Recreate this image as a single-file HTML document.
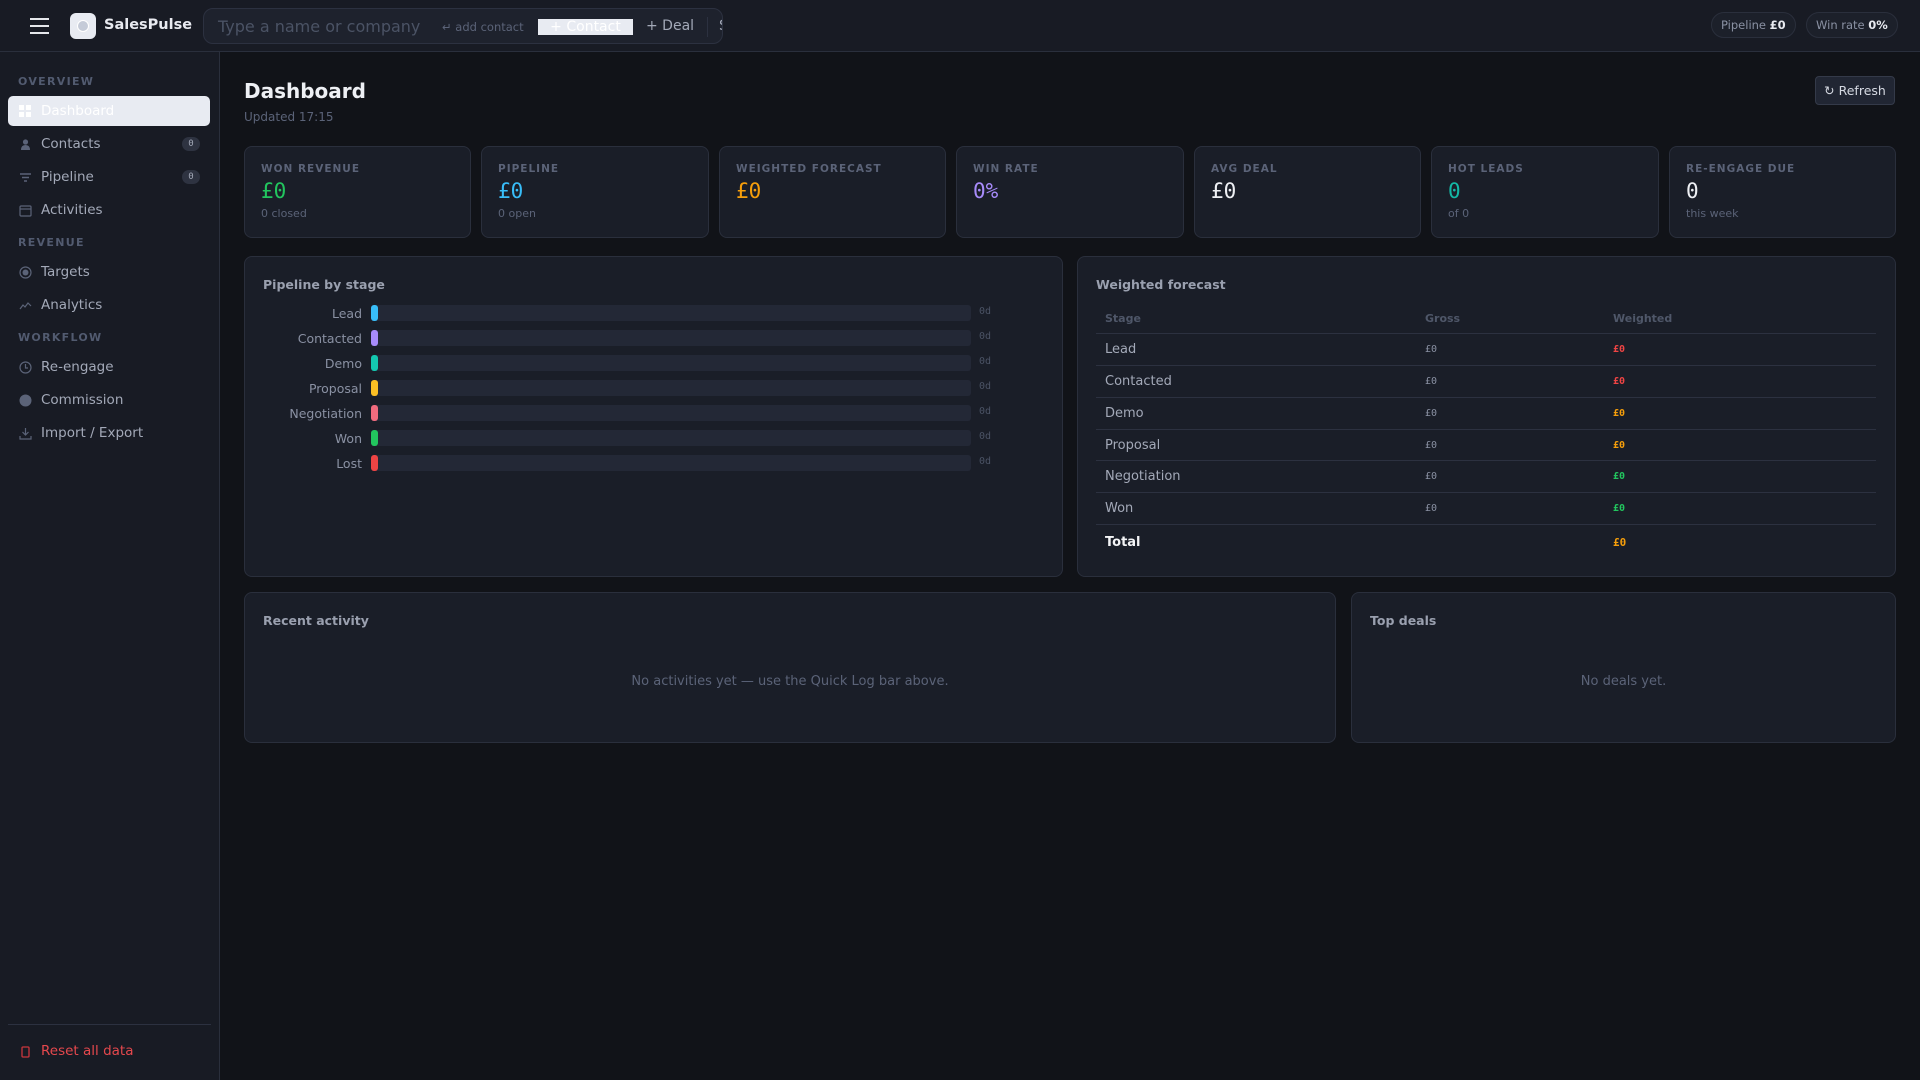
<!DOCTYPE html>
<html><head><meta charset="utf-8"><style>
*{box-sizing:border-box;margin:0;padding:0}
body{width:1920px;height:1080px;background:#111318;font-family:"DejaVu Sans","Liberation Sans",sans-serif;color:#c9cdd6;position:relative;overflow:hidden}
.a{position:absolute}
.mono{font-family:"DejaVu Sans Mono","Liberation Mono",monospace}
#top{left:0;top:0;width:1920px;height:52px;background:#181b24;border-bottom:1px solid #2a2f3c}
#side{left:0;top:52px;width:220px;height:1028px;background:#181b24;border-right:1px solid #2a2f3c}
.sec{left:18px;font-size:11px;font-weight:bold;letter-spacing:1.3px;color:#525b70}
.nav{left:8px;width:202px;height:30px;font-size:13.5px;color:#a3a9b8;line-height:30px;padding-left:33px}
.nav .ic{position:absolute;left:11px;top:9px;width:13px;height:13px}
.badge{position:absolute;right:10px;top:8px;width:18px;height:14px;border-radius:7px;background:#2e3341;color:#a3a9b8;font-size:9px;line-height:14px;text-align:center;font-family:"DejaVu Sans Mono",monospace}
.card{background:#1a1e28;border:1px solid #2a2f3c;border-radius:8px}
.kl{font-size:10.5px;font-weight:bold;letter-spacing:1px;color:#5b6378;position:absolute;left:16px;top:16px}
.kv{font-size:21px;position:absolute;left:16px;top:32px;font-family:"DejaVu Sans Mono",monospace}
.ks{font-size:11px;color:#5b6378;position:absolute;left:16px;top:60px}
.pt{font-size:12.5px;font-weight:bold;color:#9aa0af;position:absolute;left:18px;top:20px}
.lbl{width:120px;text-align:right;font-size:12.5px;color:#8a91a3;left:242px}
.bar{left:371px;width:600px;height:16px;background:#232836;border-radius:3px}
.bar i{position:absolute;left:0;top:0;width:7px;height:16px;border-radius:3px}
.dd{left:979px;font-size:10px;color:#4b5365}
.row{left:1096px;width:780px;height:32px;border-top:1px solid #2c3140;font-size:13px;color:#a3a9b8}
.row span{position:absolute;top:8px}
.pill{top:12px;height:26px;border:1px solid #2a2f3c;border-radius:13px;background:#1c202a;font-size:11.5px;color:#8a91a3;line-height:24px;padding:0 9px}
.pill b{color:#e8eaf0}
</style></head><body>
<div id="top" class="a">
  <div class="a" style="left:30px;top:18px;width:19px;height:2px;background:#e5e7eb;box-shadow:0 7px 0 #e5e7eb,0 14px 0 #e5e7eb"></div>
  <div class="a" style="left:70px;top:13px;width:26px;height:26px;border-radius:6px;background:#e8ebf2"><div class="a" style="left:7px;top:7px;width:12px;height:12px;border:1.5px solid #fff;border-radius:50%;background:#c5cbd8"></div></div>
  <div class="a" style="left:104px;top:17px;font-size:14.5px;font-weight:bold;color:#e8eaf0">SalesPulse</div>
  <div class="a" style="left:203px;top:8px;width:520px;height:36px;border:1px solid #2c3140;border-radius:10px;background:#1e222d;overflow:hidden">
    <div class="a" style="left:14px;top:8px;font-size:16px;color:#4b5365">Type a name or company</div>
    <div class="a" style="left:238px;top:11px;font-size:11.5px;color:#5b6378">↵ add contact</div>
    <div class="a" style="left:334px;top:10px;width:95px;height:16px;background:#e8ebf2;color:#fff;font-size:14px;line-height:16px;text-align:center">+ Contact</div>
    <div class="a" style="left:442px;top:9px;font-size:14px;color:#a3a9b8">+ Deal</div>
    <div class="a" style="left:503px;top:8px;width:1px;height:20px;background:#2c3140"></div>
    <div class="a" style="left:515px;top:9px;font-size:14px;color:#a3a9b8">S</div>
  </div>
  <div class="a pill" style="left:1711px">Pipeline <b>£0</b></div>
  <div class="a pill" style="left:1806px">Win rate <b>0%</b></div>
</div>
<div id="side" class="a">
  <div class="a sec" style="top:23px">OVERVIEW</div>
  <div class="a nav" style="top:44px;background:#e8ebf2;border-radius:5px;color:#fff"><div class="ic" style="background:linear-gradient(#fff,#fff) 0 0/5px 5px no-repeat,linear-gradient(#fff,#fff) 7px 0/5px 5px no-repeat,linear-gradient(#fff,#fff) 0 7px/5px 5px no-repeat,linear-gradient(#fff,#fff) 7px 7px/5px 5px no-repeat"></div>Dashboard</div>
  <div class="a nav" style="top:77px"><svg class="ic" viewBox="0 0 13 13"><circle cx="6.5" cy="4" r="2.6" fill="#5b6378"/><path d="M2 12 Q2 7 6.5 7 Q11 7 11 12Z" fill="#5b6378"/></svg>Contacts<span class="badge">0</span></div>
  <div class="a nav" style="top:110px"><svg class="ic" viewBox="0 0 13 13"><path d="M1 3h11M3 6.5h7M5 10h3" stroke="#5b6378" stroke-width="1.5"/></svg>Pipeline<span class="badge">0</span></div>
  <div class="a nav" style="top:143px"><svg class="ic" viewBox="0 0 13 13"><rect x="1" y="2" width="11" height="10" rx="1" fill="none" stroke="#5b6378" stroke-width="1.2"/><path d="M1 5h11" stroke="#5b6378" stroke-width="1.2"/></svg>Activities</div>
  <div class="a sec" style="top:184px">REVENUE</div>
  <div class="a nav" style="top:205px"><svg class="ic" viewBox="0 0 13 13"><circle cx="6.5" cy="6.5" r="5.5" fill="none" stroke="#5b6378" stroke-width="1.2"/><circle cx="6.5" cy="6.5" r="3" fill="#5b6378"/></svg>Targets</div>
  <div class="a nav" style="top:238px"><svg class="ic" viewBox="0 0 13 13"><path d="M1 10 4 6 6 8 9 4 12 7" fill="none" stroke="#5b6378" stroke-width="1.2"/></svg>Analytics</div>
  <div class="a sec" style="top:279px">WORKFLOW</div>
  <div class="a nav" style="top:300px"><svg class="ic" viewBox="0 0 13 13"><circle cx="6.5" cy="6.5" r="5.5" fill="none" stroke="#5b6378" stroke-width="1.2"/><path d="M6.5 3v4h2.5" fill="none" stroke="#5b6378" stroke-width="1.2"/></svg>Re-engage</div>
  <div class="a nav" style="top:333px"><svg class="ic" viewBox="0 0 13 13"><circle cx="6.5" cy="6.5" r="6" fill="#5b6378"/></svg>Commission</div>
  <div class="a nav" style="top:366px"><svg class="ic" viewBox="0 0 13 13"><path d="M6.5 1v7M3.5 5l3 3 3-3M1 9v3h11V9" fill="none" stroke="#5b6378" stroke-width="1.2"/></svg>Import / Export</div>
  <div class="a" style="left:8px;top:972px;width:203px;height:1px;background:#2c3140"></div>
  <div class="a nav" style="top:984px;color:#e5484d"><svg class="ic" viewBox="0 0 13 13"><rect x="3" y="2" width="7" height="10" rx="1" fill="none" stroke="#c9363c" stroke-width="1.3"/></svg>Reset all data</div>
</div>

<div class="a" style="left:244px;top:79px;font-size:20px;font-weight:bold;color:#eef0f4">Dashboard</div>
<div class="a" style="left:244px;top:110px;font-size:12px;color:#5b6378">Updated 17:15</div>
<div class="a" style="left:1815px;top:76px;width:80px;height:29px;border:1px solid #343a49;border-radius:4px;background:#212633;font-size:12.5px;color:#d5d9e2;line-height:27px;text-align:center">↻ Refresh</div>

<div class="a card" style="left:244px;top:146px;width:227px;height:92px"><div class="kl">WON REVENUE</div><div class="kv" style="color:#22c55e">£0</div><div class="ks">0 closed</div></div>
<div class="a card" style="left:481px;top:146px;width:228px;height:92px"><div class="kl">PIPELINE</div><div class="kv" style="color:#38bdf8">£0</div><div class="ks">0 open</div></div>
<div class="a card" style="left:719px;top:146px;width:227px;height:92px"><div class="kl">WEIGHTED FORECAST</div><div class="kv" style="color:#f59e0b">£0</div></div>
<div class="a card" style="left:956px;top:146px;width:228px;height:92px"><div class="kl">WIN RATE</div><div class="kv" style="color:#a78bfa">0%</div></div>
<div class="a card" style="left:1194px;top:146px;width:227px;height:92px"><div class="kl">AVG DEAL</div><div class="kv" style="color:#eef0f4">£0</div></div>
<div class="a card" style="left:1431px;top:146px;width:228px;height:92px"><div class="kl">HOT LEADS</div><div class="kv" style="color:#14b8a6">0</div><div class="ks">of 0</div></div>
<div class="a card" style="left:1669px;top:146px;width:227px;height:92px"><div class="kl">RE-ENGAGE DUE</div><div class="kv" style="color:#eef0f4">0</div><div class="ks">this week</div></div>

<div class="a card" style="left:244px;top:256px;width:819px;height:321px"><div class="pt">Pipeline by stage</div></div>
<div class="a lbl" style="top:306px">Lead</div><div class="a bar" style="top:305px"><i style="background:#38bdf8"></i></div><div class="a dd mono" style="top:306px">0d</div>
<div class="a lbl" style="top:331px">Contacted</div><div class="a bar" style="top:330px"><i style="background:#a78bfa"></i></div><div class="a dd mono" style="top:331px">0d</div>
<div class="a lbl" style="top:356px">Demo</div><div class="a bar" style="top:355px"><i style="background:#14c8b0"></i></div><div class="a dd mono" style="top:356px">0d</div>
<div class="a lbl" style="top:381px">Proposal</div><div class="a bar" style="top:380px"><i style="background:#fbbf24"></i></div><div class="a dd mono" style="top:381px">0d</div>
<div class="a lbl" style="top:406px">Negotiation</div><div class="a bar" style="top:405px"><i style="background:#f16b7e"></i></div><div class="a dd mono" style="top:406px">0d</div>
<div class="a lbl" style="top:431px">Won</div><div class="a bar" style="top:430px"><i style="background:#22c55e"></i></div><div class="a dd mono" style="top:431px">0d</div>
<div class="a lbl" style="top:456px">Lost</div><div class="a bar" style="top:455px"><i style="background:#ef4444"></i></div><div class="a dd mono" style="top:456px">0d</div>

<div class="a card" style="left:1077px;top:256px;width:819px;height:321px"><div class="pt">Weighted forecast</div></div>
<div class="a" style="left:1105px;top:312px;font-size:11px;font-weight:bold;color:#4f5769">Stage</div>
<div class="a" style="left:1425px;top:312px;font-size:11px;font-weight:bold;color:#4f5769">Gross</div>
<div class="a" style="left:1613px;top:312px;font-size:11px;font-weight:bold;color:#4f5769">Weighted</div>
<div class="a row" style="top:333px"><span style="left:9px">Lead</span><span class="mono" style="left:329px;font-size:10px;top:10px;color:#8a91a3">£0</span><span class="mono" style="left:517px;font-size:10px;top:10px;color:#ef4444;font-weight:bold">£0</span></div>
<div class="a row" style="top:365px"><span style="left:9px">Contacted</span><span class="mono" style="left:329px;font-size:10px;top:10px;color:#8a91a3">£0</span><span class="mono" style="left:517px;font-size:10px;top:10px;color:#ef4444;font-weight:bold">£0</span></div>
<div class="a row" style="top:397px"><span style="left:9px">Demo</span><span class="mono" style="left:329px;font-size:10px;top:10px;color:#8a91a3">£0</span><span class="mono" style="left:517px;font-size:10px;top:10px;color:#f59e0b;font-weight:bold">£0</span></div>
<div class="a row" style="top:429px"><span style="left:9px">Proposal</span><span class="mono" style="left:329px;font-size:10px;top:10px;color:#8a91a3">£0</span><span class="mono" style="left:517px;font-size:10px;top:10px;color:#f59e0b;font-weight:bold">£0</span></div>
<div class="a row" style="top:460px"><span style="left:9px">Negotiation</span><span class="mono" style="left:329px;font-size:10px;top:10px;color:#8a91a3">£0</span><span class="mono" style="left:517px;font-size:10px;top:10px;color:#22c55e;font-weight:bold">£0</span></div>
<div class="a row" style="top:492px"><span style="left:9px">Won</span><span class="mono" style="left:329px;font-size:10px;top:10px;color:#8a91a3">£0</span><span class="mono" style="left:517px;font-size:10px;top:10px;color:#22c55e;font-weight:bold">£0</span></div>
<div class="a row" style="top:524px;height:36px"><span style="left:9px;top:10px;font-weight:bold;color:#f3f4f6">Total</span><span class="mono" style="left:517px;font-size:11px;top:11px;color:#f59e0b;font-weight:bold">£0</span></div>

<div class="a card" style="left:244px;top:592px;width:1092px;height:151px"><div class="pt">Recent activity</div><div class="a" style="left:0;width:100%;top:81px;text-align:center;font-size:13px;color:#5b6378">No activities yet — use the Quick Log bar above.</div></div>
<div class="a card" style="left:1351px;top:592px;width:545px;height:151px"><div class="pt">Top deals</div><div class="a" style="left:0;width:100%;top:81px;text-align:center;font-size:13px;color:#5b6378">No deals yet.</div></div>
</body></html>
